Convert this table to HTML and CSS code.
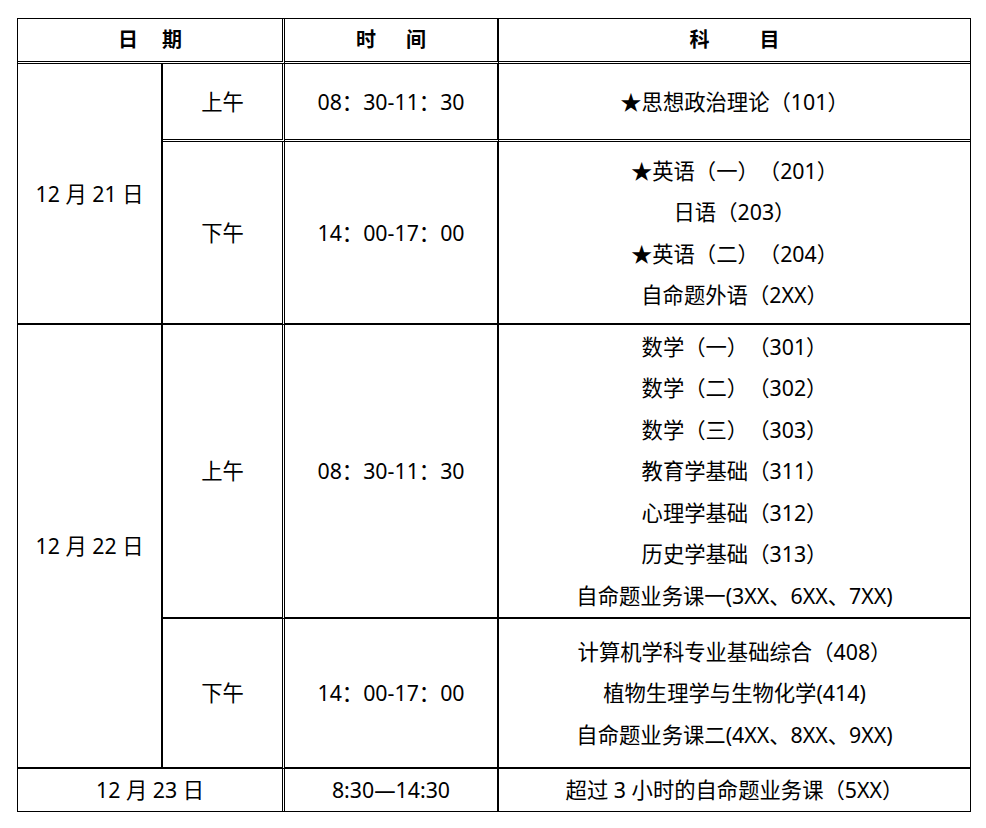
FILE: index.html
```html
<!DOCTYPE html>
<html lang="zh-CN">
<head>
<meta charset="utf-8">
<title>考试时间安排</title>
<link rel="stylesheet" href="styles.css">
</head>
<body>
<table class="schedule">
  <colgroup>
    <col class="c-date">
    <col class="c-half">
    <col class="c-time">
    <col class="c-subj">
  </colgroup>
  <thead>
    <tr>
      <th colspan="2" class="br-d bb-d h-head"><span class="sp sp-date">日期</span></th>
      <th class="br-s bb-d h-head"><span class="sp sp-time">时间</span></th>
      <th class="bb-d h-head"><span class="sp sp-subj">科目</span></th>
    </tr>
  </thead>
  <tbody>
    <tr>
      <td rowspan="2" class="br-s bb-s">12 月 21 日</td>
      <td class="br-d bb-d h-r1">上午</td>
      <td class="br-s bb-d h-r1">08：30-11：30</td>
      <td class="bb-d h-r1">★思想政治理论（101）</td>
    </tr>
    <tr>
      <td class="br-d bb-s h-r2">下午</td>
      <td class="br-s bb-s h-r2">14：00-17：00</td>
      <td class="bb-s h-r2">
        <div class="line">★英语（一）（201）</div>
        <div class="line">日语（203）</div>
        <div class="line">★英语（二）（204）</div>
        <div class="line">自命题外语（2XX）</div>
      </td>
    </tr>
    <tr>
      <td rowspan="2" class="br-s bb-s">12 月 22 日</td>
      <td class="br-d bb-s h-r3">上午</td>
      <td class="br-s bb-s h-r3">08：30-11：30</td>
      <td class="bb-s h-r3">
        <div class="line">数学（一）（301）</div>
        <div class="line">数学（二）（302）</div>
        <div class="line">数学（三）（303）</div>
        <div class="line">教育学基础（311）</div>
        <div class="line">心理学基础（312）</div>
        <div class="line">历史学基础（313）</div>
        <div class="line">自命题业务课一(3XX、6XX、7XX)</div>
      </td>
    </tr>
    <tr>
      <td class="br-d bb-s h-r4">下午</td>
      <td class="br-s bb-s h-r4">14：00-17：00</td>
      <td class="bb-s h-r4">
        <div class="line">计算机学科专业基础综合（408）</div>
        <div class="line">植物生理学与生物化学(414)</div>
        <div class="line">自命题业务课二(4XX、8XX、9XX)</div>
      </td>
    </tr>
    <tr>
      <td colspan="2" class="br-d h-r5">12 月 23 日</td>
      <td class="br-s h-r5">8:30—14:30</td>
      <td class="h-r5">超过 3 小时的自命题业务课（5XX）</td>
    </tr>
  </tbody>
</table>
</body>
</html>
```
FILE: styles.css
```css
* {
  box-sizing: border-box;
}

body {
  margin: 0;
  background: #fff;
  color: #000;
  font-family: "Noto Sans", "Noto Sans CJK SC", sans-serif;
}

.schedule {
  margin: 18px 0 0 17px;
  width: 954px;
  border: 1px solid #000;
  border-collapse: separate;
  border-spacing: 0;
  table-layout: fixed;
  font-size: 21.33px;
  text-spacing-trim: space-all;
}

.c-date { width: 145px; }
.c-half { width: 122px; }
.c-time { width: 214px; }
.c-subj { width: 471px; }

.schedule th,
.schedule td {
  padding: 0;
  text-align: center;
  vertical-align: middle;
  font-weight: normal;
  line-height: 1.3;
  white-space: nowrap;
}

.schedule th {
  font-weight: bold;
  font-size: 20px;
}

.br-d { border-right: 3px double #000; }
.br-s { border-right: 2px solid #000; }
.bb-d { border-bottom: 3px double #000; }
.bb-s { border-bottom: 2px solid #000; }

.h-head { height: 45px; }
.h-r1 { height: 78px; }
.h-r2 { height: 183px; }
.h-r3 { height: 294px; }
.h-r4 { height: 150px; }
.h-r5 { height: 42px; }

.line {
  line-height: 41.5px;
}

.sp { display: inline-block; }
.sp-date { letter-spacing: 24px; margin-right: -24px; }
.sp-time { letter-spacing: 30px; margin-right: -30px; }
.sp-subj { letter-spacing: 50px; margin-right: -50px; }
```
